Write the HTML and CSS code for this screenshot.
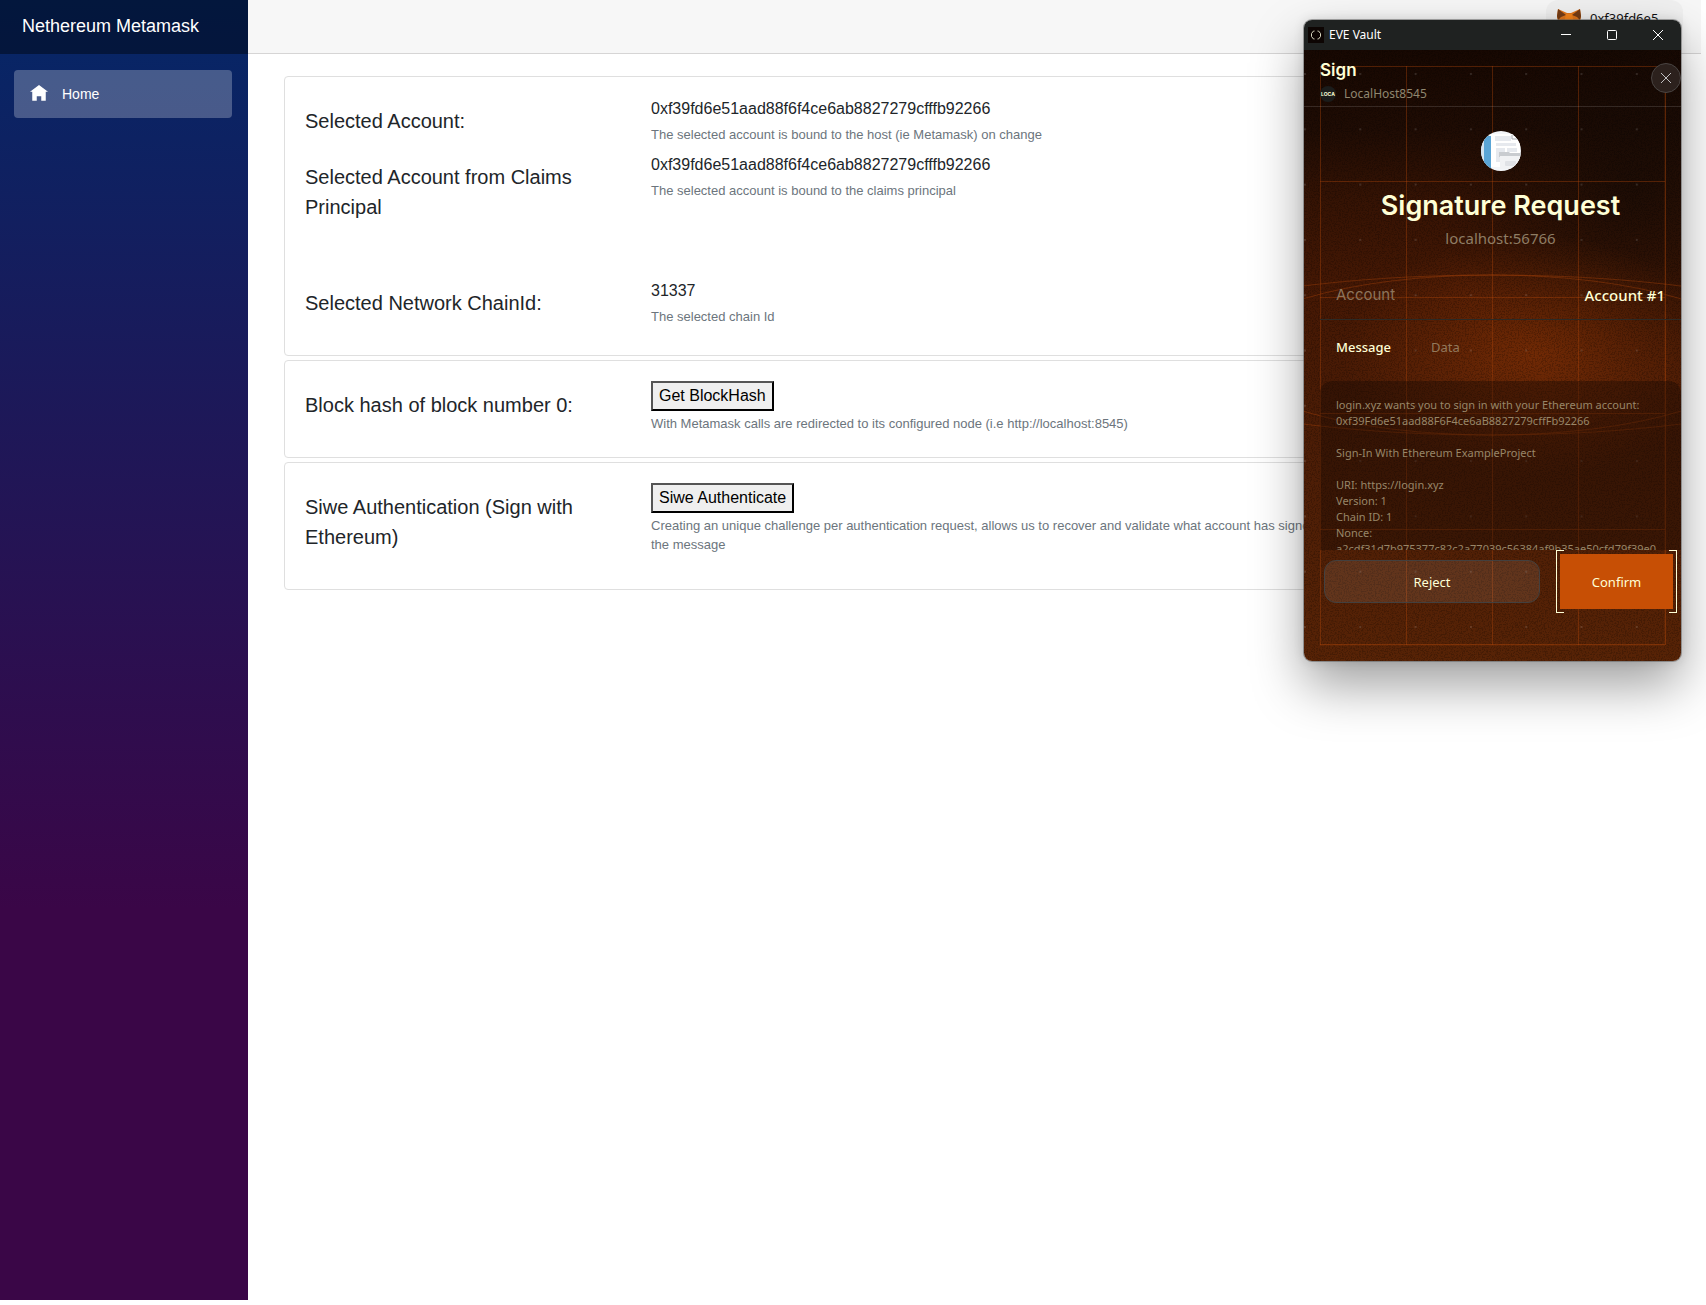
FILE: index.html
```html
<!DOCTYPE html>
<html lang="en">
<head>
<meta charset="utf-8">
<title>Nethereum Metamask</title>
<meta name="viewport" content="width=device-width, initial-scale=1">
<link rel="stylesheet" href="styles.css">
</head>
<body>
<div class="page">
  <aside class="sidebar">
    <div class="brand"><a class="brand-link" href="#">Nethereum Metamask</a></div>
    <nav class="nav">
      <a class="nav-link" href="#">
        <svg class="nav-icon" viewBox="0 0 8 8" aria-hidden="true"><path fill="currentColor" d="M4 0l-4 3h1v4h2v-2h2v2h2v-4.03l1 .03-4-3z"/></svg>
        Home
      </a>
    </nav>
  </aside>
  <div class="content">
    <header class="topbar">
      <div class="account-chip">
        <svg class="fox" viewBox="0 0 24 22" aria-hidden="true">
          <path fill="#e2761b" d="M1 0l9 4h4l9-4 1 8-2 8-6 5H8l-6-5-2-8z"/>
          <path fill="#763d16" d="M1 0l8 6-5 2-3 3-1-4zM23 0l-8 6 5 2 3 3 1-4z"/>
          <path fill="#f6851b" d="M9 5h6l2 9-5 3-5-3z"/>
        </svg>
        <span>0xf39fd6e5</span>
      </div>
    </header>
    <main class="main">
      <section class="card">
        <div class="row">
          <h2 class="label">Selected Account:</h2>
          <div class="value">
            <div>0xf39fd6e51aad88f6f4ce6ab8827279cfffb92266</div>
            <small class="help">The selected account is bound to the host (ie Metamask) on change</small>
          </div>
        </div>
        <div class="row row-spaced">
          <h2 class="label">Selected Account from Claims Principal</h2>
          <div class="value">
            <div>0xf39fd6e51aad88f6f4ce6ab8827279cfffb92266</div>
            <small class="help">The selected account is bound to the claims principal</small>
          </div>
        </div>
        <div class="row">
          <h2 class="label">Selected Network ChainId:</h2>
          <div class="value">
            <div>31337</div>
            <small class="help">The selected chain Id</small>
          </div>
        </div>
      </section>
      <section class="card">
        <div class="row">
          <h2 class="label">Block hash of block number 0:</h2>
          <div class="value">
            <button class="action" type="button">Get BlockHash</button>
            <small class="help">With Metamask calls are redirected to its configured node (i.e http://localhost:8545)</small>
          </div>
        </div>
      </section>
      <section class="card">
        <div class="row">
          <h2 class="label">Siwe Authentication (Sign with Ethereum)</h2>
          <div class="value">
            <button class="action" type="button">Siwe Authenticate</button>
            <small class="help">Creating an unique challenge per authentication request, allows us to recover and validate what account has signed the message</small>
          </div>
        </div>
      </section>
    </main>
  </div>
</div>

<div class="wallet" role="dialog" aria-label="EVE Vault">
  <div class="titlebar">
    <svg class="app-icon" viewBox="0 0 16 16" aria-hidden="true"><rect width="16" height="16" fill="#0d0503"/><path d="M6.500 4h-1L3.500 6.500v3l2 2.500h1M9.500 4h1l2 2.500v3l-2 2.500h-1" fill="none" stroke="#d8d6bf"/></svg>
    <span class="app-name">EVE Vault</span>
    <button class="win-btn" type="button" aria-label="Minimize"><svg viewBox="0 0 12 12"><path d="M1 5.500h10"/></svg></button>
    <button class="win-btn" type="button" aria-label="Maximize"><svg viewBox="0 0 12 12"><rect x="1.500" y="1.500" width="9" height="9" rx="1"/></svg></button>
    <button class="win-btn" type="button" aria-label="Close"><svg viewBox="0 0 12 12"><path d="M1 1l10 10M11 1L1 11"/></svg></button>
  </div>
  <div class="wallet-body">
    <svg class="backdrop" viewBox="0 0 377 611" aria-hidden="true">
      <defs>
        <filter id="grain" x="0" y="0" width="100%" height="100%">
          <feTurbulence type="fractalNoise" baseFrequency="0.7" numOctaves="2" seed="4"/>
          <feColorMatrix values="0 0 0 0 0  0 0 0 0 0  0 0 0 0 0  0 0 0 -5 2.700"/>
        </filter>
        <pattern id="dots" x="0" y="23" width="55.300" height="55.300" patternUnits="userSpaceOnUse"><rect x="0" y="0" width="2" height="2" fill="#fff" fill-opacity=".12"/></pattern>
      </defs>
      <rect width="377" height="611" filter="url(#grain)" opacity=".2"/>
      <rect width="377" height="611" fill="url(#dots)"/>
      <g fill="none" stroke="#b4460a" stroke-opacity=".38">
        <path d="M16.500 16V595M102.500 16V595M188.500 16V595M274.500 16V595M361.500 16V595"/>
        <path d="M16 16.500H361M16 131.500H361M16 247.500H361M16 363.500H361M16 479.500H361M16 594.500H361"/>
        <ellipse cx="188" cy="305" rx="373" ry="80"/>
        <ellipse cx="188" cy="305" rx="265" ry="80"/>
      </g>
      <path d="M361 16V595M16 595H361" stroke="#b4460a" stroke-opacity=".12" stroke-width="2"/>
    </svg>
    <header class="wallet-head">
      <h1 class="wallet-title">Sign</h1>
      <div class="network"><span class="network-mark">LOCA</span>LocalHost8545</div>
      <button class="dismiss" type="button" aria-label="Dismiss"><svg viewBox="0 0 12 12"><path d="M1 1l10 10M11 1L1 11"/></svg></button>
    </header>
    <div class="wallet-content">
      <svg class="site-icon" viewBox="0 0 40 40" aria-hidden="true">
        <defs><clipPath id="disc"><circle cx="20" cy="20" r="20"/></clipPath></defs>
        <g clip-path="url(#disc)">
          <rect width="40" height="40" fill="#f4f6f9"/>
          <rect width="4" height="40" fill="#d3e3ef"/>
          <rect x="3" y="5" width="7" height="32" fill="#5aa5d6"/>
          <rect x="10" y="3" width="29" height="33" fill="#fff"/>
          <path fill="#e6e9ee" d="M14 5h16v5H14zM15 12h20v3H15zM15 17h9v14h-9zM26 17h10v4H26z"/>
          <path d="M31 4v4h6" fill="none" stroke="#a9adb4"/>
          <path fill="#c9ccd0" d="M18 21h10l1 1h11v4H18z"/>
          <rect x="19" y="25" width="21" height="13" fill="#f1f2f4"/>
          <rect x="24" y="30" width="11" height="5" rx="1" fill="#e0e2e6"/>
        </g>
      </svg>
      <h2 class="request-title">Signature Request</h2>
      <p class="origin">localhost:56766</p>
      <div class="account-row"><span class="account-label">Account</span><span class="account-name">Account #1</span></div>
      <div class="tabs">
        <button class="tab tab-active" type="button">Message</button>
        <button class="tab" type="button">Data</button>
      </div>
      <div class="message">login.xyz wants you to sign in with your Ethereum account:
0xf39Fd6e51aad88F6F4ce6aB8827279cffFb92266

Sign-In With Ethereum ExampleProject

URI: https://login.xyz
Version: 1
Chain ID: 1
Nonce:
a2cdf31d7b975377c82c2a77039c56384af9b35ae50cfd79f39e0</div>
      <div class="actions">
        <button class="reject" type="button">Reject</button>
        <div class="confirm-frame"><button class="confirm" type="button">Confirm</button></div>
      </div>
    </div>
  </div>
</div>
</body>
</html>
```
FILE: styles.css
```css
* { box-sizing: border-box; }

body {
  margin: 0;
  background: #fff;
  color: #212529;
  font: 16px/24px "Liberation Sans", Arial, sans-serif;
}

h1, h2, p { margin: 0; font-weight: 400; }
button { font: inherit; cursor: pointer; }

.page {
  display: flex;
  min-height: 100vh;
  padding: 0 5px 5px 0;
}

.sidebar {
  flex: 0 0 248px;
  background: linear-gradient(180deg, #052767 0%, #3a0647 70%);
}

.brand {
  display: flex;
  align-items: center;
  height: 54px;
  padding: 0 22px 2px;
  background: rgba(0, 0, 0, .4);
}

.brand-link { color: #fff; font-size: 18px; text-decoration: none; }

.nav { padding: 16px 16px 0 14px; }

.nav-link {
  display: flex;
  align-items: center;
  gap: 14px;
  height: 48px;
  padding: 0 16px;
  border-radius: 4px;
  background: rgba(255, 255, 255, .25);
  color: #fff;
  font-size: 14px;
  text-decoration: none;
}

.nav-icon { width: 18px; height: 18px; }

.content { flex: 1; min-width: 0; }

.topbar {
  display: flex;
  justify-content: flex-end;
  height: 54px;
  padding-right: 18px;
  border-bottom: 1px solid #d6d5d5;
  background: #f7f7f7;
}

.account-chip {
  display: flex;
  align-items: flex-start;
  gap: 9px;
  width: 137px;
  height: 48px;
  padding: 8px 11px;
  border-radius: 12px;
  background: #f0f0f0;
  color: #111;
  font: 13px/20px "Noto Sans", sans-serif;
}

.fox { flex: none; width: 24px; height: 24px; }

.main {
  display: flex;
  flex-direction: column;
  gap: 4px;
  padding: 22px 36px;
}

.card {
  padding: 19px 20px 21px;
  border: 1px solid #dfdfdf;
  border-radius: 4px;
}

.row {
  display: grid;
  grid-template-columns: minmax(0, 322px) minmax(0, 670px);
  column-gap: 24px;
}

.row-spaced { margin-bottom: 40px; }

.label {
  padding: 10px 0 16px;
  font-size: 20px;
  line-height: 30px;
}

.value { padding-top: 1px; }

.help {
  display: block;
  margin-top: 4px;
  color: #6c757d;
  font-size: 13px;
  line-height: 19px;
}

.action {
  display: block;
  height: 30px;
  padding: 1px 6px;
  border: 2px solid;
  border-color: #555 #000 #000 #555;
  background: #efefef;
  color: #000;
  line-height: 24px;
}

.action + .help { margin-top: 3px; }

/* floating wallet window */
.wallet {
  position: absolute;
  top: 20px;
  right: 25px;
  width: 377px;
  overflow: hidden;
  border-radius: 8px;
  color: #ffffd6;
  font-family: "Noto Sans", sans-serif;
  box-shadow: 0 0 0 1px rgba(90, 90, 90, .5), 0 24px 52px rgba(0, 0, 0, .38), 0 0 12px rgba(0, 0, 0, .12);
}

.titlebar {
  display: flex;
  align-items: center;
  height: 30px;
  padding-left: 4px;
  background: #1f2221;
  color: #fff;
}

.app-icon { width: 16px; height: 16px; }
.app-name { flex: 1; padding-left: 5px; font-size: 12px; line-height: 16px; }

.win-btn {
  display: grid;
  place-items: center;
  width: 46px;
  height: 30px;
  padding: 0;
  border: 0;
  background: none;
  color: #fff;
}

.win-btn svg, .dismiss svg {
  width: 12px;
  height: 12px;
  fill: none;
  stroke: currentColor;
}

.wallet-body {
  position: relative;
  background:
    radial-gradient(ellipse 190px 120px at 230px 305px, rgba(135, 50, 5, .65), rgba(135, 50, 5, 0)),
    radial-gradient(ellipse 200px 200px at 330px 140px, rgba(20, 10, 5, .7), rgba(20, 10, 5, 0)),
    linear-gradient(180deg, #170802 0, #1f0c04 80px, #351304 150px, #451804 240px, #4c1d06 400px, #572306 611px);
}

.backdrop { position: absolute; inset: 0; width: 100%; height: 100%; }

.wallet-head {
  position: relative;
  height: 57px;
  padding: 9px 16px 0;
  border-bottom: 1px solid rgba(255, 255, 255, .13);
}

.wallet-title {
  font: 600 17px/22px Inter, sans-serif;
}

.network {
  display: flex;
  align-items: center;
  gap: 8px;
  margin-top: 4px;
  color: #90866f;
  font-size: 12px;
  line-height: 18px;
}

.network-mark {
  width: 16px;
  height: 16px;
  border-radius: 8px;
  background: #1b1c1b;
  color: #ffffd6;
  font: 700 5px/16px Inter, sans-serif;
  text-align: center;
}

.dismiss {
  position: absolute;
  top: 13px;
  right: 0;
  display: grid;
  place-items: center;
  width: 30px;
  height: 30px;
  padding: 0;
  border: 1px solid #4a4543;
  border-radius: 15px;
  background: #2c211d;
  color: #c0bfc0;
}

.wallet-content {
  position: relative;
  display: flex;
  flex-direction: column;
  padding: 24px 0 48px 16px;
}

.site-icon { align-self: center; width: 40px; height: 40px; }

.request-title {
  margin-top: 17px;
  font: 600 27px/36px Inter, sans-serif;
  text-align: center;
}

.origin {
  margin-top: 2px;
  color: #8f7d64;
  font-size: 15px;
  line-height: 24px;
  text-align: center;
}

.account-row {
  display: flex;
  justify-content: space-between;
  margin-top: 33px;
  padding: 0 16px 12px;
  border-bottom: 1px solid #2c2a26;
  font-size: 15px;
  line-height: 24px;
}

.account-label { color: #8d745b; font-family: Inter, sans-serif; }
.account-name { font-weight: 500; }

.tabs { display: flex; gap: 40px; padding: 17px 16px 24px; }

.tab {
  padding: 0;
  border: 0;
  background: none;
  color: #93795c;
  font-size: 13px;
  line-height: 20px;
}

.tab-active { color: #ffffd6; font-weight: 500; }

.message {
  height: 169px;
  overflow: hidden;
  padding: 16px 16px 0;
  border-radius: 12px 12px 0 0;
  background: rgba(20, 8, 2, .38);
  color: #988668;
  font-size: 11px;
  line-height: 16px;
  white-space: pre;
}

.actions {
  display: flex;
  align-items: center;
  gap: 16px;
  padding: 0 4px;
}

.reject {
  flex: 1;
  height: 43px;
  border: 1px solid #43403f;
  border-radius: 12px;
  background: rgba(255, 255, 255, .09);
  color: #ffffd6;
  font-size: 13px;
}

/* corner brackets: short cream ticks joined by the side borders */
.confirm-frame {
  width: 121px;
  height: 63px;
  padding: 4px 3px;
  border: solid #ffffd6;
  border-width: 0 1px;
  background:
    linear-gradient(#ffffd6, #ffffd6) 0 0 / 7px 1px no-repeat,
    linear-gradient(#ffffd6, #ffffd6) 100% 0 / 7px 1px no-repeat,
    linear-gradient(#ffffd6, #ffffd6) 0 100% / 7px 1px no-repeat,
    linear-gradient(#ffffd6, #ffffd6) 100% 100% / 7px 1px no-repeat;
}

.confirm {
  width: 100%;
  height: 55px;
  border: 0;
  background: #c74f05;
  color: #ffffd6;
  font-size: 13px;
}
```
